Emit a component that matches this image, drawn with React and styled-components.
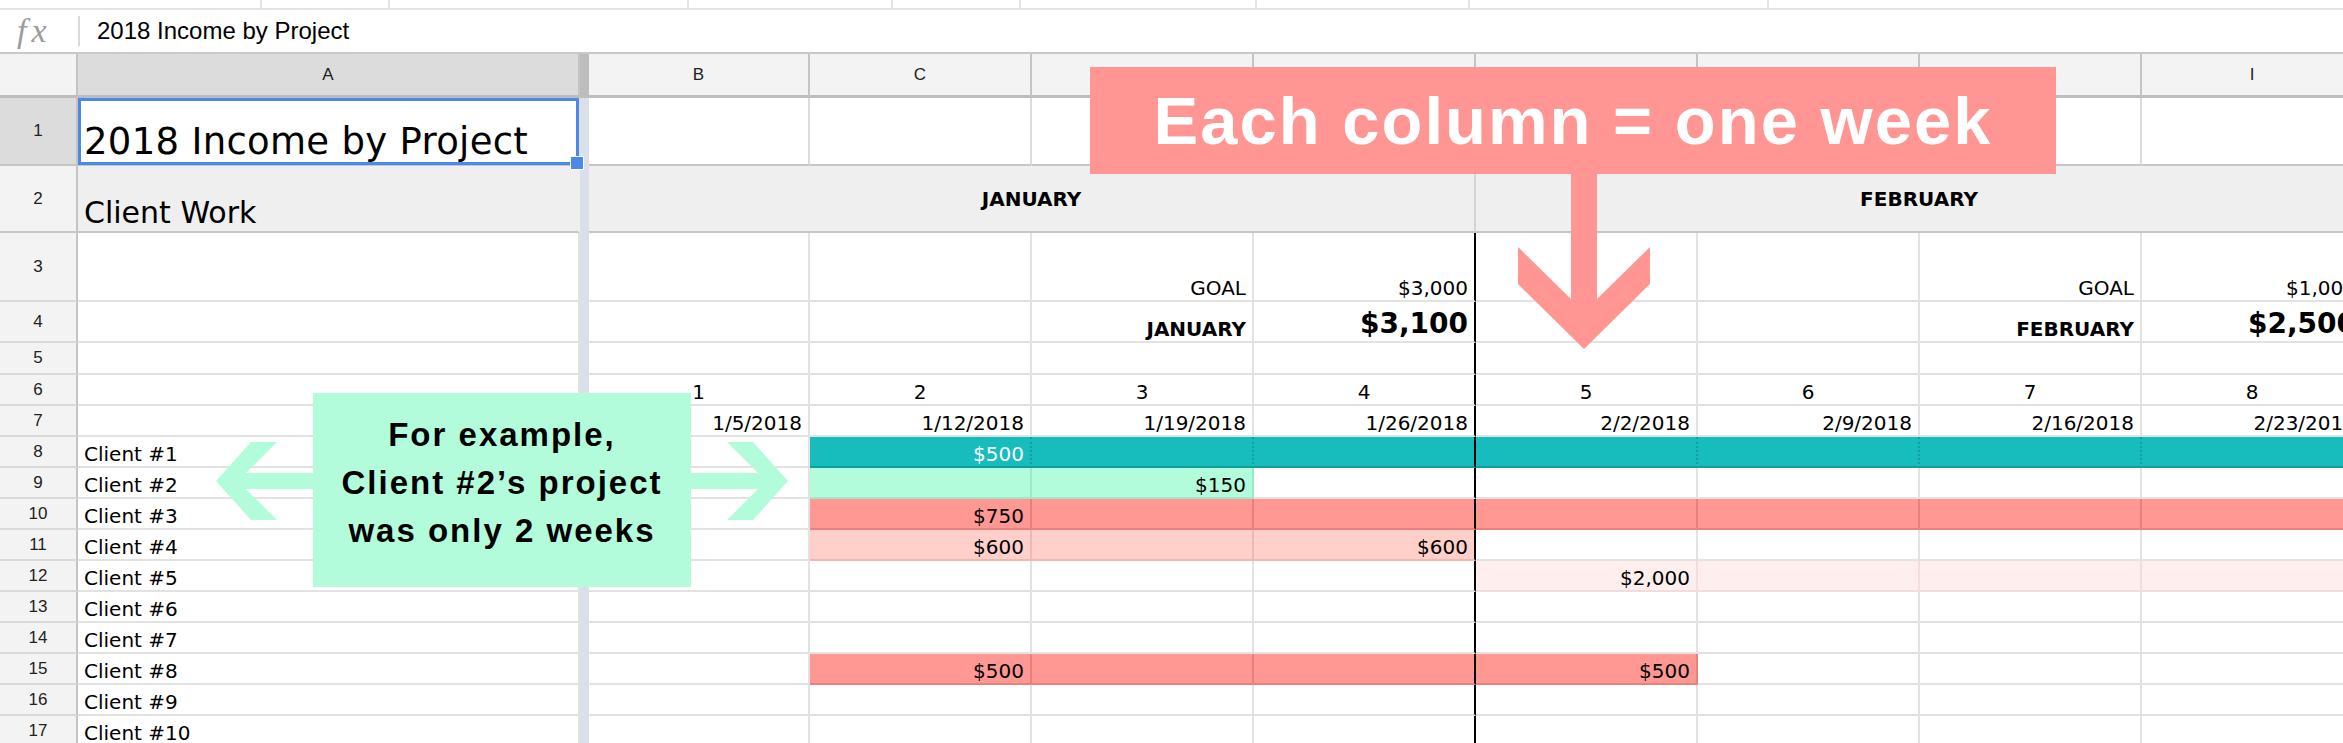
import React from 'react';
import styled, { createGlobalStyle } from 'styled-components';

const SHEET_FONT = '"DejaVu Sans", "Noto Sans", sans-serif';
const UI_FONT = '"Liberation Sans", Arial, sans-serif';

const GlobalStyle = createGlobalStyle`
  * { box-sizing: border-box; }
  html, body {
    margin: 0;
    padding: 0;
    background: #fff;
    overflow: hidden;
    font-family: ${UI_FONT};
  }
`;

const COLUMNS = ['B', 'C', 'D', 'E', 'F', 'G', 'H', 'I'];
const WEEKS = ['1', '2', '3', '4', '5', '6', '7', '8'];
const DATES = ['1/5/2018', '1/12/2018', '1/19/2018', '1/26/2018', '2/2/2018', '2/9/2018', '2/16/2018', '2/23/2018'];
const STRIP = [262, 128, 299, 204, 128, 236, 213, 299];

const FILLS = {
  teal: { bg: '#17bcbc', line: '#0f9f9f', dotted: true },
  mint: { bg: '#b3fcdb', line: '#9de8c7' },
  salmon: { bg: '#ff9793', line: '#e6817e' },
  blush: { bg: '#ffcfc9', line: '#f1b8b2' },
  pale: { bg: '#ffeeee', line: '#f5dcdc' },
};

const CLIENTS = [
  { name: 'Client #1', fill: 'teal', from: 1, to: 7, values: { 1: '$500' }, color: '#fff' },
  { name: 'Client #2', fill: 'mint', from: 1, to: 2, values: { 2: '$150' } },
  { name: 'Client #3', fill: 'salmon', from: 1, to: 7, values: { 1: '$750' } },
  { name: 'Client #4', fill: 'blush', from: 1, to: 3, values: { 1: '$600', 3: '$600' } },
  { name: 'Client #5', fill: 'pale', from: 4, to: 7, values: { 4: '$2,000' } },
  { name: 'Client #6' },
  { name: 'Client #7' },
  { name: 'Client #8', fill: 'salmon', from: 1, to: 4, values: { 1: '$500', 4: '$500' } },
  { name: 'Client #9' },
  { name: 'Client #10' },
];

const Page = styled.div`
  position: relative;
  width: 2343px;
  height: 743px;
  overflow: hidden;
  background: #fff;
`;

const TopStrip = styled.div`
  display: flex;
  height: 10px;
  border-bottom: 2px solid #e3e3e3;
`;

const StripSegment = styled.div`
  flex: 0 0 ${p => p.$w}px;
  border-right: 2px solid #e3e3e3;
`;

const FormulaBar = styled.div`
  display: flex;
  align-items: center;
  height: 44px;
  border-bottom: 2px solid #c9c9c9;
`;

const FxLabel = styled.div`
  width: 78px;
  padding-left: 17px;
  font-family: "Liberation Serif", "DejaVu Serif", serif;
  font-style: italic;
  font-size: 34px;
  line-height: 1;
  color: #9c9c9c;
  letter-spacing: 5px;
`;

const FxDivider = styled.div`
  width: 2px;
  height: 30px;
  background: #d8d8d8;
`;

const FormulaText = styled.div`
  margin-left: 17px;
  font-family: ${UI_FONT};
  font-size: 24px;
  color: #000;
`;

const Sheet = styled.div`
  display: grid;
  grid-template-columns: 78px 502px 9px 221px repeat(7, 222px);
  grid-template-rows: 44px 68px 67px 69px 41px 32px repeat(12, 31px);
`;

const Corner = styled.div`
  background: #f3f3f3;
  border-right: 2px solid #c4c4c4;
  border-bottom: 3px solid #bdbdbd;
`;

const ColHeader = styled.div`
  display: flex;
  align-items: center;
  justify-content: center;
  background: ${p => (p.$selected ? '#dcdcdc' : '#f3f3f3')};
  border-right: 2px solid #c4c4c4;
  border-bottom: 3px solid #bdbdbd;
  font-family: ${UI_FONT};
  font-size: 17px;
  color: #222;
`;

const FreezeBar = styled.div`
  grid-column: 3;
  grid-row: 1 / -1;
  background: linear-gradient(#bdbdbd 0 44px, #dae0ea 44px);
`;

const RowHeader = styled.div`
  display: flex;
  align-items: center;
  justify-content: center;
  background: ${p => (p.$selected ? '#dcdcdc' : '#f3f3f3')};
  border-right: 2px solid #c4c4c4;
  border-bottom: 2px solid ${p => p.$bb || '#d9d9d9'};
  font-family: ${UI_FONT};
  font-size: 17px;
  color: #222;
`;

const ALIGN = { left: 'flex-start', right: 'flex-end', center: 'center' };

const Cell = styled.div`
  position: relative;
  display: flex;
  align-items: ${p => (p.$middle ? 'center' : 'flex-end')};
  justify-content: ${p => ALIGN[p.$align || 'left']};
  grid-column: span ${p => p.$span || 1};
  min-width: 0;
  padding: 0 6px;
  background: ${p => p.$bg || '#fff'};
  border-right: 2px ${p => (p.$dotted && !p.$divider ? 'dotted' : 'solid')}
    ${p => (p.$divider ? '#000' : p.$line || '#e2e2e2')};
  border-bottom: 2px solid ${p => p.$bb || p.$line || '#e2e2e2'};
  font-family: ${SHEET_FONT};
  font-size: ${p => p.$size || 20}px;
  font-weight: ${p => (p.$bold ? 700 : 400)};
  letter-spacing: ${p => p.$spacing || 0}px;
  color: ${p => p.$color || '#000'};
  line-height: 1.2;
  white-space: nowrap;
`;

const Selection = styled.span`
  position: absolute;
  top: 0;
  left: 0;
  right: -1px;
  bottom: -1px;
  border: 3px solid #4a89e8;
  pointer-events: none;
  z-index: 2;
`;

const Handle = styled.span`
  position: absolute;
  right: -8px;
  bottom: -8px;
  width: 14px;
  height: 14px;
  background: #4a89e8;
  border: 1px solid #fff;
`;

const Banner = styled.div`
  position: absolute;
  left: 1090px;
  top: 67px;
  width: 966px;
  height: 107px;
  display: flex;
  align-items: center;
  justify-content: center;
  background: #ff9693;
  color: #fff;
  font-family: ${UI_FONT};
  font-weight: 700;
  font-size: 67px;
  letter-spacing: 2px;
  z-index: 5;
`;

const Overlay = styled.svg`
  position: absolute;
  left: ${p => p.$x}px;
  top: ${p => p.$y}px;
  z-index: 5;
`;

const Callout = styled.div`
  position: absolute;
  left: 313px;
  top: 393px;
  width: 378px;
  height: 194px;
  padding-top: 18px;
  background: #b3fcdb;
  color: #000;
  text-align: center;
  font-family: ${UI_FONT};
  font-weight: 700;
  font-size: 33px;
  line-height: 48px;
  letter-spacing: 2px;
  z-index: 5;
`;

function DownArrow() {
  return (
    <Overlay $x={1518} $y={173} width="132" height="176" viewBox="0 0 132 176">
      <polygon points="53,0 79,0 79,126 132,74 132,111 66,176 0,111 0,74 53,126" fill="#ff9693" />
    </Overlay>
  );
}

function SideArrow({ x, flip }) {
  const pts = [[0, 39], [35, 0], [61, 0], [30, 31], [97, 31], [97, 47], [30, 47], [61, 78], [35, 78]];
  const points = pts.map(([px, py]) => `${flip ? 97 - px : px},${py}`).join(' ');
  return (
    <Overlay $x={x} $y={442} width="97" height="78" viewBox="0 0 97 78">
      <polygon points={points} fill="#b3fcdb" />
    </Overlay>
  );
}

function ClientRow({ client, number }) {
  const fill = client.fill ? FILLS[client.fill] : null;
  return (
    <>
      <RowHeader>{number}</RowHeader>
      <Cell $size={20}>{client.name}</Cell>
      {COLUMNS.map((col, i) => {
        const filled = fill && i >= client.from && i <= client.to;
        return (
          <Cell
            key={col}
            $align="right"
            $divider={i === 3}
            $bg={filled ? fill.bg : undefined}
            $line={filled ? fill.line : undefined}
            $dotted={filled && fill.dotted}
            $color={client.color}
          >
            {client.values && client.values[i]}
          </Cell>
        );
      })}
    </>
  );
}

export default function App() {
  return (
    <Page>
      <GlobalStyle />
      <TopStrip>
        {STRIP.map((w, i) => (
          <StripSegment key={i} $w={w} />
        ))}
      </TopStrip>
      <FormulaBar>
        <FxLabel>fx</FxLabel>
        <FxDivider />
        <FormulaText>2018 Income by Project</FormulaText>
      </FormulaBar>

      <Sheet>
        <FreezeBar />
        <Corner />
        <ColHeader $selected>A</ColHeader>
        {COLUMNS.map(c => (
          <ColHeader key={c}>{c}</ColHeader>
        ))}

        {/* row 1 */}
        <RowHeader $selected $bb="#c6c6c6">1</RowHeader>
        <Cell $size={37} $spacing={0.3} $bb="#c6c6c6">
          2018 Income by Project
          <Selection>
            <Handle />
          </Selection>
        </Cell>
        {COLUMNS.map(c => (
          <Cell key={c} $bb="#c6c6c6" $line="#dcdcdc" />
        ))}

        {/* row 2 */}
        <RowHeader $bb="#c6c6c6">2</RowHeader>
        <Cell $size={30} $bg="#efefef" $bb="#c6c6c6" $line="#efefef">Client Work</Cell>
        <Cell $span={4} $align="center" $middle $bold $bg="#efefef" $line="#d4d4d4" $bb="#c6c6c6">JANUARY</Cell>
        <Cell $span={4} $align="center" $middle $bold $bg="#efefef" $line="#d4d4d4" $bb="#c6c6c6">FEBRUARY</Cell>

        {/* row 3 */}
        <RowHeader>3</RowHeader>
        <Cell />
        {['', '', 'GOAL', '$3,000', '', '', 'GOAL', '$1,000'].map((v, i) => (
          <Cell key={i} $align="right" $divider={i === 3}>{v}</Cell>
        ))}

        {/* row 4 */}
        <RowHeader>4</RowHeader>
        <Cell />
        {['', '', 'JANUARY', '$3,100', '', '', 'FEBRUARY', '$2,500'].map((v, i) => (
          <Cell key={i} $align="right" $bold $size={i % 4 === 3 ? 28 : 20} $divider={i === 3}>{v}</Cell>
        ))}

        {/* row 5 */}
        <RowHeader>5</RowHeader>
        <Cell />
        {COLUMNS.map((c, i) => (
          <Cell key={c} $divider={i === 3} />
        ))}

        {/* row 6 */}
        <RowHeader>6</RowHeader>
        <Cell />
        {WEEKS.map((w, i) => (
          <Cell key={w} $align="center" $divider={i === 3}>{w}</Cell>
        ))}

        {/* row 7 */}
        <RowHeader>7</RowHeader>
        <Cell />
        {DATES.map((d, i) => (
          <Cell key={d} $align="right" $divider={i === 3}>{d}</Cell>
        ))}

        {CLIENTS.map((client, i) => (
          <ClientRow key={client.name} client={client} number={i + 8} />
        ))}
      </Sheet>

      <Banner>Each column = one week</Banner>
      <DownArrow />

      <SideArrow x={216} />
      <Callout>
        For example,
        <br />
        Client #2’s project
        <br />
        was only 2 weeks
      </Callout>
      <SideArrow x={691} flip />
    </Page>
  );
}
